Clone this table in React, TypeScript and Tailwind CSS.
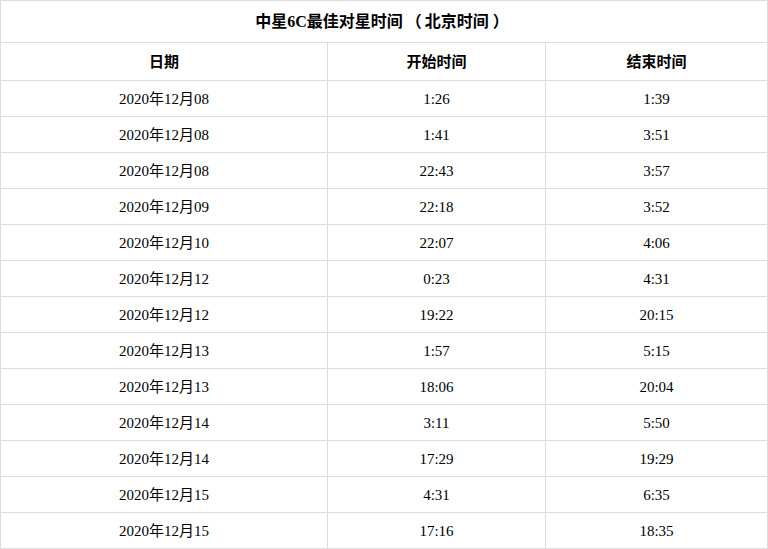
import React from 'react';

const rows: [string, string, string][] = [
  ['08', '1:26', '1:39'],
  ['08', '1:41', '3:51'],
  ['08', '22:43', '3:57'],
  ['09', '22:18', '3:52'],
  ['10', '22:07', '4:06'],
  ['12', '0:23', '4:31'],
  ['12', '19:22', '20:15'],
  ['13', '1:57', '5:15'],
  ['13', '18:06', '20:04'],
  ['14', '3:11', '5:50'],
  ['14', '17:29', '19:29'],
  ['15', '4:31', '6:35'],
  ['15', '17:16', '18:35'],
];

const font = "font-['Liberation_Serif','Noto_Sans_CJK_SC',serif]";
const cell = 'flex items-center justify-center pt-[2px]';

export default function App() {
  return (
    <div className={`w-[768px] bg-white text-black border border-[#dddddd] ${font}`}>
      <div className="h-[42px] pt-[1px] border-b border-[#dddddd] flex items-center justify-center text-[16px] font-bold">
        <span>中星6C最佳对星时间</span>
        <span className="inline-block mx-[3px]">（</span>
        <span>北京时间</span>
        <span className="inline-block mx-[4px]">）</span>
      </div>
      <div className="h-[38px] border-b border-[#dddddd] grid grid-cols-[327px_218px_1fr] text-[15px] font-bold">
        <div className="border-r border-[#dddddd] flex items-center justify-center pt-[1px]">日期</div>
        <div className="border-r border-[#dddddd] flex items-center justify-center pt-[1px]">开始时间</div>
        <div className="flex items-center justify-center pt-[1px]">结束时间</div>
      </div>
      {rows.map(([day, start, end], i) => (
        <div
          key={i}
          className={`grid grid-cols-[327px_218px_1fr] text-[15px] ${
            i === rows.length - 1 ? 'h-[35px]' : 'h-[36px] border-b border-[#dddddd]'
          }`}
        >
          <div className={`border-r border-[#dddddd] ${cell}`}>2020年12月{day}</div>
          <div className={`border-r border-[#dddddd] ${cell}`}>{start}</div>
          <div className={cell}>{end}</div>
        </div>
      ))}
    </div>
  );
}
